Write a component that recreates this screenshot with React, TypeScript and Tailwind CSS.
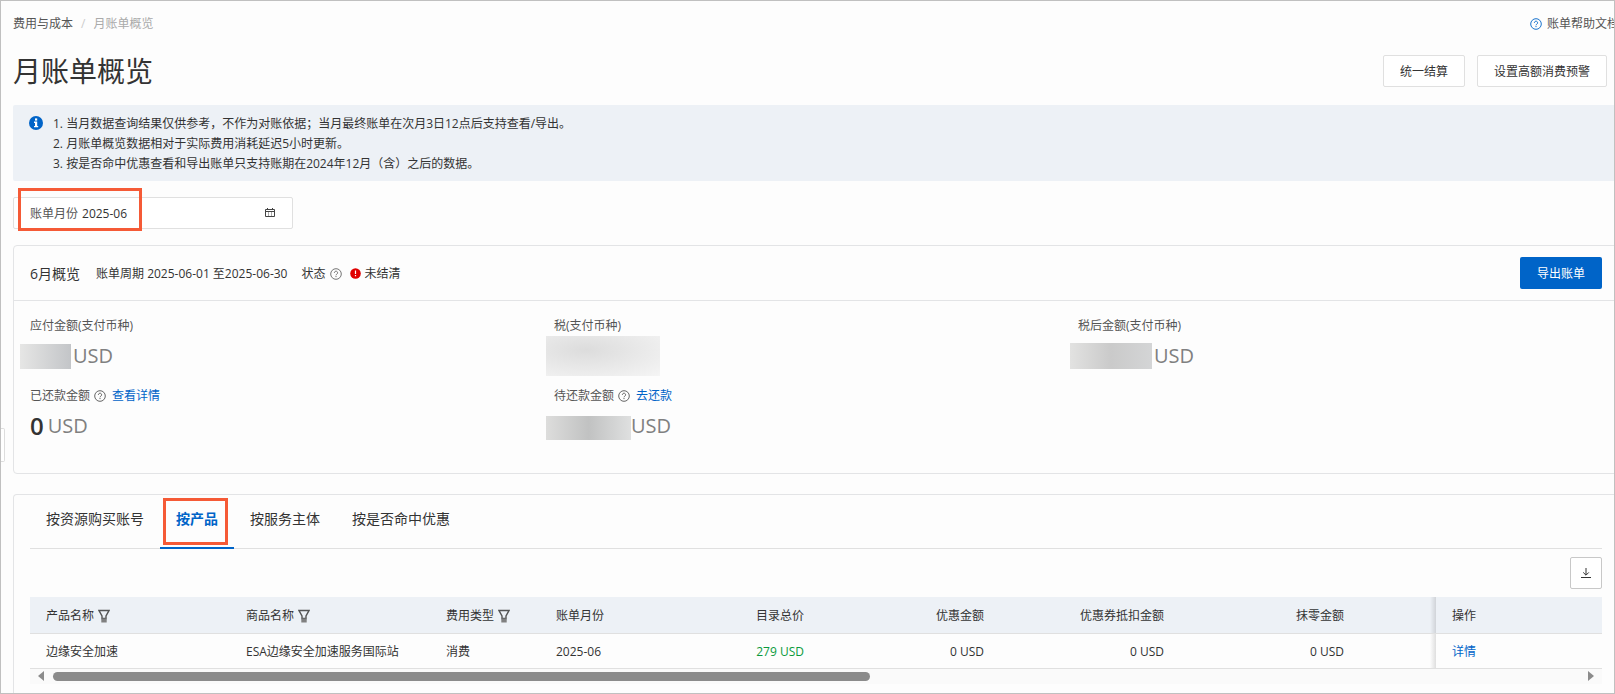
import React from "react";
import clsx from "clsx";

const tabs = ["按资源购买账号", "按产品", "按服务主体", "按是否命中优惠"];

const columns = [
  { title: "产品名称", width: "w-[200px]", filter: true },
  { title: "商品名称", width: "w-[200px]", filter: true },
  { title: "费用类型", width: "w-[110px]", filter: true },
  { title: "账单月份", width: "w-[100px]" },
  { title: "目录总价", width: "w-[180px]", right: true },
  { title: "优惠金额", width: "w-[180px]", right: true },
  { title: "优惠券抵扣金额", width: "w-[180px]", right: true },
  { title: "抹零金额", width: "", right: true, last: true },
];

const rows = [
  ["边缘安全加速", "ESA边缘安全加速服务国际站", "消费", "2025-06", "279 USD", "0 USD", "0 USD", "0 USD"],
];

const HelpIcon = ({ className }: { className?: string }) => (
  <svg viewBox="0 0 12 12" className={clsx("h-3 w-3 shrink-0", className)} fill="none" stroke="currentColor">
    <circle cx="6" cy="6" r="5.3" strokeWidth="0.9" />
    <path d="M4.4 4.9a1.6 1.6 0 1 1 2.5 1.2c-.6.4-.9.6-.9 1.2" strokeWidth="0.9" />
    <path d="M6 8.1v1" strokeWidth="1" />
  </svg>
);

const InfoIcon = () => (
  <svg viewBox="0 0 14 14" className="mt-0.5 h-3.5 w-3.5 shrink-0">
    <circle cx="7" cy="7" r="7" fill="#0064c8" />
    <rect x="6" y="2.4" width="2.2" height="2.2" fill="#fff" />
    <path d="M5 5.6h3.2v4.4h1v1.3H5V10h1V6.9H5z" fill="#fff" />
  </svg>
);

const ErrorIcon = () => (
  <svg viewBox="0 0 11 11" className="h-[11px] w-[11px] shrink-0">
    <circle cx="5.5" cy="5.5" r="5.3" fill="#e00000" />
    <path d="M5.5 2.5v3.5M5.5 7v1.3" stroke="#fff" strokeWidth="1.2" />
  </svg>
);

const CalendarIcon = () => (
  <svg viewBox="0 0 10 10" className="mr-px h-2.5 w-2.5 shrink-0" fill="none" stroke="#444" strokeWidth="1">
    <path d="M.5 1.5h9v7h-9zM.5 3.5h9M2.5 0v2M7.5 0v2" />
    <path d="M3.5 4v4M6.5 4v4" stroke="#aaa" />
  </svg>
);

const FilterIcon = () => (
  <svg viewBox="0 0 12 14" className="h-3.5 w-3 shrink-0" fill="none" stroke="#555">
    <path d="M1 1.5h10L8 7v2.5H4V7z" strokeWidth="1.4" />
    <path d="M3.3 9.5h5.4v4H3.3z" fill="#808080" stroke="none" />
  </svg>
);

const DownloadIcon = () => (
  <svg viewBox="0 0 10 10" className="h-2.5 w-2.5" fill="none" stroke="#333">
    <path d="M5 0v7M2.2 4.4L5 7.2l2.8-2.8M0 9.5h10" />
  </svg>
);

type MetricProps = {
  label: string;
  help?: boolean;
  link?: string;
  children?: React.ReactNode;
};

const Metric = ({ label, help, link, children }: MetricProps) => (
  <div className="h-[70px]">
    <div className="flex h-5 items-center leading-5 text-[#555]">
      {label}
      {help && <HelpIcon className="ml-1" />}
      {link && (
        <a href="#" className="ml-1.5 text-[#0064c8]">
          {link}
        </a>
      )}
    </div>
    <div className="mt-1.5 flex h-7 items-center text-xl text-[#808080]">{children}</div>
  </div>
);

const outlineButton = "h-8 rounded-xs border border-[#e0e0e0] bg-white px-4 pt-px text-[#333]";

const pinnedCell =
  "relative w-[166px] px-4 before:absolute before:inset-y-0 before:-left-1.5 before:w-1.5 before:bg-linear-to-r before:from-transparent before:to-black/12";

export default function App() {
  return (
    <div className="relative flex h-screen flex-col overflow-hidden border border-[#c0c0c0] bg-[#fdfdfd] font-['Open_Sans','Noto_Sans_CJK_SC',sans-serif] text-xs text-[#333]">
      {/* collapsed side menu handle */}
      <button
        aria-label="展开菜单"
        className="absolute top-[427px] left-0 h-[34px] w-1 rounded-r-xs border border-l-0 border-[#ddd] bg-white"
      />

      <main className="-mr-[5px] flex flex-1 flex-col pt-[13px] pl-3">
        <nav className="flex h-5 items-center justify-between">
          <div className="flex">
            <a href="#" className="text-[#555]">费用与成本</a>
            <span className="mx-2 text-[#ccc]">/</span>
            <span className="text-[#aaa]">月账单概览</span>
          </div>
          <a href="#" className="flex items-center gap-[5px] whitespace-nowrap text-[#555]">
            <HelpIcon className="text-[#0064c8]" />
            账单帮助文档
          </a>
        </nav>

        <header className="mt-[19px] flex h-9 items-center justify-between pr-3">
          <h1 className="text-[28px] leading-9">月账单概览</h1>
          <div className="flex gap-3">
            <button className={outlineButton}>统一结算</button>
            <button className={outlineButton}>设置高额消费预警</button>
          </div>
        </header>

        <section className="mt-4 flex gap-2.5 rounded-xs bg-[#edf1f6] px-4 pt-[9px] pb-[7px] leading-5">
          <InfoIcon />
          <div>
            <p>1. 当月数据查询结果仅供参考，不作为对账依据；当月最终账单在次月3日12点后支持查看/导出。</p>
            <p>2. 月账单概览数据相对于实际费用消耗延迟5小时更新。</p>
            <p>3. 按是否命中优惠查看和导出账单只支持账期在2024年12月（含）之后的数据。</p>
          </div>
        </section>

        <div className="relative mt-4 flex h-8 w-[280px] items-center rounded-xs border border-[#e0e0e0] bg-white px-4">
          <label htmlFor="month" className="shrink-0 pt-px text-[#555]">账单月份</label>
          <input id="month" defaultValue="2025-06" className="ml-1 w-full min-w-0 pt-px outline-none" />
          <CalendarIcon />
          <span className="pointer-events-none absolute -top-2.5 left-1 h-[43px] w-[124px] border-3 border-[#f55a36]" />
        </div>

        <section className="mt-4 rounded-sm border border-[#e3e4e6]">
          <div className="flex h-[55px] items-center justify-between border-b border-[#e3e4e6] px-4">
            <div className="flex items-center pt-px">
              <h2 className="text-sm font-normal">6月概览</h2>
              <span className="ml-4">账单周期 2025-06-01 至2025-06-30</span>
              <span className="ml-3.5">状态</span>
              <HelpIcon className="mr-2 ml-1 text-[#666]" />
              <ErrorIcon />
              <span className="ml-1">未结清</span>
            </div>
            <button className="h-8 rounded-xs bg-[#0064c8] px-[17px] pt-px text-white">导出账单</button>
          </div>
          <div className="grid grid-cols-3 px-4 pt-[15px] pb-[17px]">
            <Metric label="应付金额(支付币种)">
              <span className="mr-0.5 -ml-2.5 h-[25px] w-[51px] bg-linear-to-r from-[#e6e6e5] to-[#c3c5c8]" />
              USD
            </Metric>
            <Metric label="税(支付币种)">
              <span className="-ml-2 h-10 w-[114px] shrink-0 bg-radial-[at_35%_35%] from-[#dcdcdc] to-[#f5f5f5]" />
            </Metric>
            <Metric label="税后金额(支付币种)">
              <span className="mr-0.5 -ml-2 h-[26px] w-[82px] bg-linear-to-r from-[#e2e2e1] via-[#cacaca] to-[#d4d5d6]" />
              USD
            </Metric>
            <Metric label="已还款金额" help link="查看详情">
              <span className="mr-1 text-2xl font-semibold text-[#333]">0</span>
              USD
            </Metric>
            <Metric label="待还款金额" help link="去还款">
              <span className="-ml-2 h-6 w-[85px] self-end bg-linear-to-r from-[#dddddc] via-[#c1c2c2] to-[#dfe0e0]" />
              USD
            </Metric>
          </div>
        </section>

        <section className="mt-5 flex-1 rounded-t-sm border border-b-0 border-[#e3e4e6] px-4">
          <div role="tablist" className="flex h-[54px] border-b border-[#e0e0e0] text-sm">
            {tabs.map((tab) => {
              const active = tab === "按产品";
              return (
                <button
                  key={tab}
                  role="tab"
                  aria-selected={active}
                  className={clsx(
                    "relative -mb-px border-b-2 px-4 pb-1",
                    active ? "border-[#0064c8] font-bold text-[#0064c8]" : "border-transparent"
                  )}
                >
                  {tab}
                  {active && (
                    <span className="absolute top-[3px] right-1.5 bottom-0.5 left-[3px] border-3 border-[#f55a36]" />
                  )}
                </button>
              );
            })}
          </div>

          <div className="flex justify-end py-2">
            <button
              aria-label="下载"
              className="flex h-8 w-8 items-center justify-center rounded-xs border border-[#c8c8c8] bg-white"
            >
              <DownloadIcon />
            </button>
          </div>

          <table className="w-full table-fixed">
            <thead>
              <tr className="h-9 border-b border-[#e0e0e0] bg-[#edf1f6] text-left">
                {columns.map((col) => (
                  <th
                    key={col.title}
                    className={clsx(
                      "px-4 pt-px font-normal",
                      col.width,
                      col.right && "text-right",
                      col.last && "pr-[92px]"
                    )}
                  >
                    <span className="inline-flex items-center gap-1 align-middle">
                      {col.title}
                      {col.filter && <FilterIcon />}
                    </span>
                  </th>
                ))}
                <th className={clsx(pinnedCell, "pt-0.5 font-normal")}>操作</th>
              </tr>
            </thead>
            <tbody>
              {rows.map((row) => (
                <tr key={row[1]} className="h-[35px] border-b border-[#e0e0e0]">
                  {row.map((value, i) => (
                    <td
                      key={columns[i].title}
                      className={clsx(
                        "px-4 pt-0.5 whitespace-nowrap",
                        columns[i].right && "text-right",
                        columns[i].last && "pr-[92px]",
                        i === 4 && "text-[#0a9a3c]"
                      )}
                    >
                      {value}
                    </td>
                  ))}
                  <td className={clsx(pinnedCell, "pt-0.5")}>
                    <a href="#" className="text-[#0064c8]">详情</a>
                  </td>
                </tr>
              ))}
            </tbody>
          </table>

          {/* horizontal scrollbar */}
          <div className="flex h-[15px] items-center bg-[#fafafa] px-2">
            <svg viewBox="0 0 6 10" className="h-2.5 w-1.5" fill="#8b8b8b">
              <path d="M6 0v10L0 5z" />
            </svg>
            <div className="ml-[9px] mr-2 h-[9px] flex-1">
              <div className="h-full w-[53.5%] rounded-full bg-[#8b8b8b]" />
            </div>
            <svg viewBox="0 0 6 10" className="h-2.5 w-1.5" fill="#8b8b8b">
              <path d="M0 0v10l6-5z" />
            </svg>
          </div>
        </section>
      </main>
    </div>
  );
}
